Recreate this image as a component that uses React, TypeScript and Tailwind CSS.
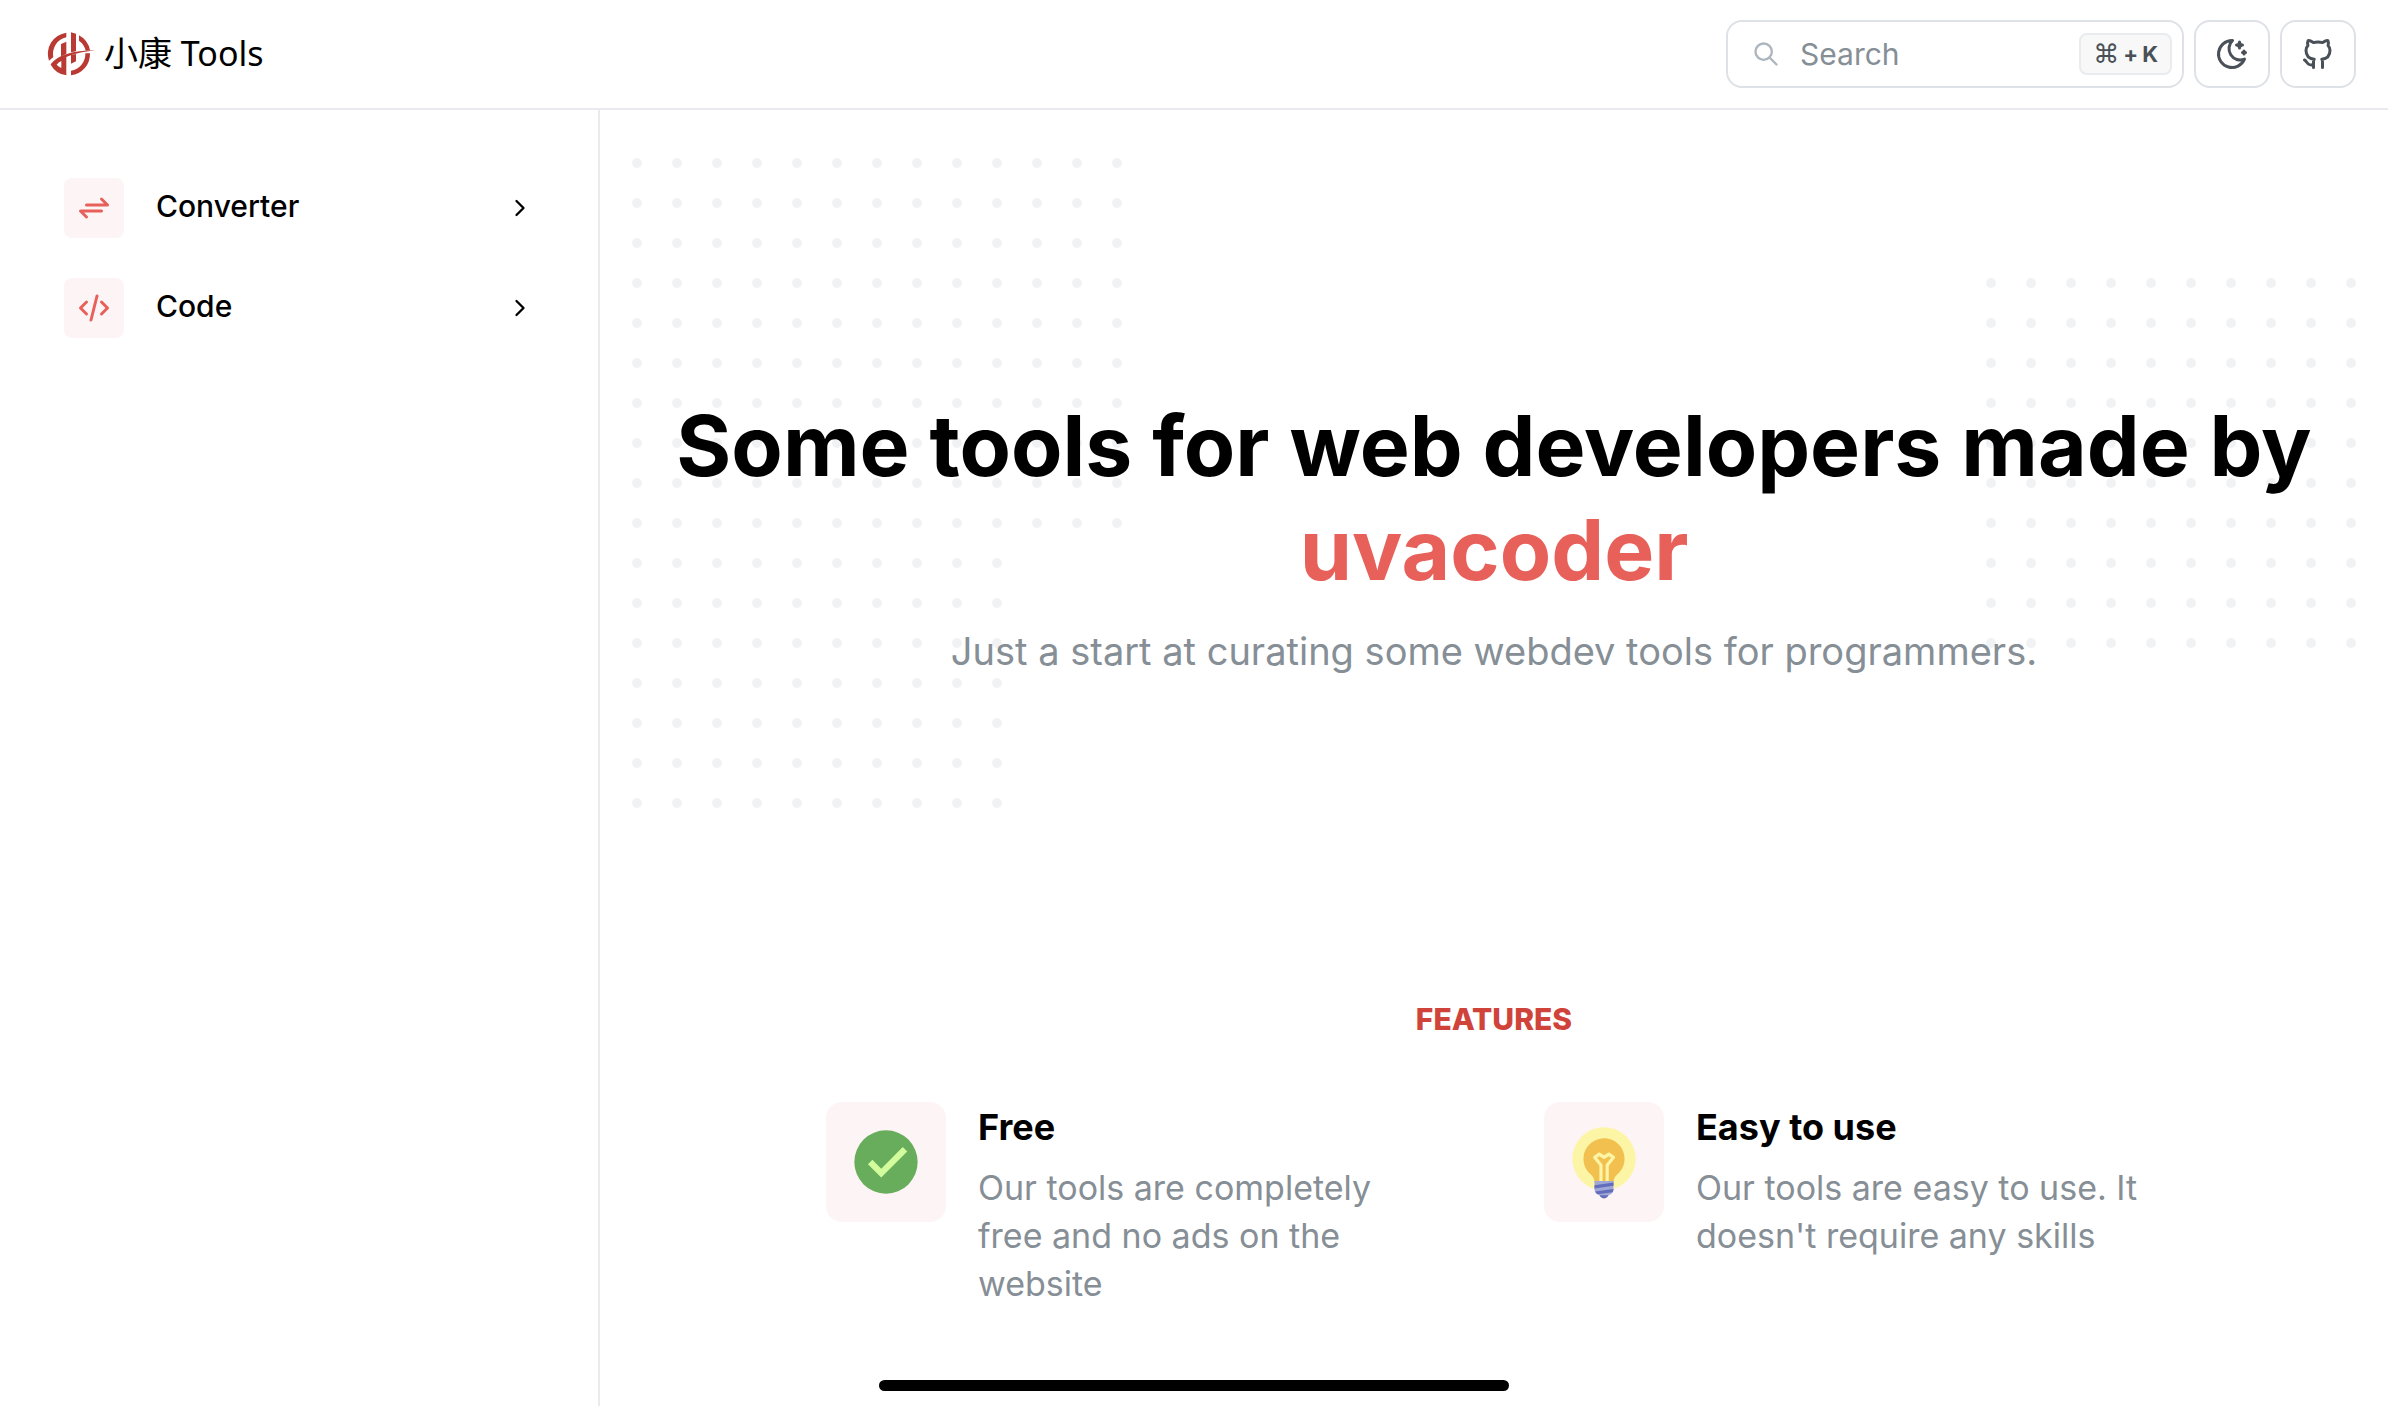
import { TbArrowsExchange, TbBrandGithub, TbChevronRight, TbCode, TbMoonStars, TbSearch } from "react-icons/tb";
import type { ReactNode } from "react";

function LogoMark() {
  return (
    <svg viewBox="0 0 162 162" className="size-[54px]" aria-hidden="true">
      <g fill="#b93a33">
        <path d="M67 20 A64 64 0 0 0 15 104 L28 93 A50 50 0 0 1 67 34 Z" />
        <path d="M51 54 L67 47 V84 L51 91 Z" />
        <path d="M81 19 L96 23 V76 L81 79 Z" />
        <path d="M105 28 A64 64 0 0 1 138 73 L125 74 A50 50 0 0 0 105 44 Z" />
        <path d="M138 82 A64 64 0 0 1 81 148 V134 A50 50 0 0 0 124 82 Z" />
        <path d="M81 87 L96 84 V106 L81 113 Z" />
        <path d="M20 116 Q36 98 67 89 V148 A64 64 0 0 1 20 116 Z" />
        <path d="M20 115 Q50 74 155 73 Q66 82 26 117 Z" />
      </g>
      <path d="M38 116 Q44 108 52 105 V126 Q43 122 38 116 Z" fill="#fff" />
    </svg>
  );
}

function CheckIcon() {
  return (
    <svg viewBox="0 0 48 48" className="size-[76px]" aria-hidden="true">
      <circle cx="24" cy="24" r="20" fill="#68ad5b" />
      <polygon fill="#d3fd9d" points="34.6,14.6 21,28.2 15.4,22.6 12.6,25.4 21,33.8 37.4,17.4" />
    </svg>
  );
}

function IdeaIcon() {
  return (
    <svg viewBox="0 0 48 48" className="size-[76px]" aria-hidden="true">
      <circle fill="#fdf5a6" cx="24" cy="22" r="20" />
      <path
        fill="#f1c04f"
        d="M37,22c0-7.7-6.6-13.8-14.5-12.9c-6,0.7-10.8,5.5-11.4,11.5c-0.5,4.6,1.4,8.7,4.6,11.3c1.4,1.2,2.3,2.9,2.3,4.8V37h12v-0.1c0-1.8,0.8-3.6,2.2-4.8C35.1,29.7,37,26.1,37,22z"
      />
      <path
        fill="#fdf5a6"
        d="M30.6,20.2l-3-2c-0.3-0.2-0.8-0.2-1.1,0L24,19.8l-2.4-1.6c-0.3-0.2-0.8-0.2-1.1,0l-3,2c-0.2,0.2-0.4,0.4-0.4,0.7s0,0.6,0.2,0.8l3.8,4.7V37h2V26c0-0.2-0.1-0.4-0.2-0.6l-3.3-4.1l1.5-1l2.4,1.6c0.3,0.2,0.8,0.2,1.1,0l2.4-1.6l1.5,1l-3.3,4.1C25.1,25.6,25,25.8,25,26v11h2V26.4l3.8-4.7c0.2-0.2,0.3-0.5,0.2-0.8S30.8,20.3,30.6,20.2z"
      />
      <circle fill="#626dbb" cx="24" cy="44" r="3" />
      <path fill="#a1a8d7" d="M26,45h-4c-2.2,0-4-1.8-4-4v-5h12v5C30,43.2,28.2,45,26,45z" />
      <g fill="#626dbb">
        <path d="M30,41l-11.6,1.6c0.3,0.7,0.9,1.4,1.6,1.8l9.4-1.3C29.8,42.5,30,41.8,30,41z" />
        <polygon points="18,38.7 18,40.7 30,39 30,37" />
      </g>
    </svg>
  );
}

function Dots({ cols, rows }: { cols: number; rows: number }) {
  const dots: ReactNode[] = [];
  for (let r = 0; r < rows; r++) {
    for (let c = 0; c < cols; c++) {
      dots.push(<circle key={`${r}-${c}`} cx={c * 40 + 5} cy={r * 40 + 5} r="5" />);
    }
  }
  return (
    <svg width={cols * 40 - 30} height={rows * 40 - 30} fill="#f1f2f4" aria-hidden="true">
      {dots}
    </svg>
  );
}

function NavItem({ icon, label }: { icon: ReactNode; label: string }) {
  return (
    <li>
      <button type="button" className="flex w-full items-center gap-8 px-16 py-5 text-black">
        <span className="flex size-[60px] items-center justify-center rounded-lg bg-[#fdf4f5] text-[#e8605a]">
          {icon}
        </span>
        <span className="pb-1 text-[30px] leading-[44px] font-medium">{label}</span>
        <TbChevronRight className="ml-auto size-7" />
      </button>
    </li>
  );
}

function Feature({ icon, title, children }: { icon: ReactNode; title: string; children: ReactNode }) {
  return (
    <article className="flex items-start gap-8">
      <div className="flex size-[120px] shrink-0 items-center justify-center rounded-2xl bg-[#fdf4f5]">{icon}</div>
      <div className="pr-4">
        <h3 className="text-[36px] leading-[50px] font-bold">{title}</h3>
        <p className="mt-3 text-[34px] leading-[48px] text-[#868e96]">{children}</p>
      </div>
    </article>
  );
}

const iconButton =
  "flex h-[68px] w-[76px] items-center justify-center rounded-2xl border-2 border-[#dee2e6] bg-white text-[#495057]";

export default function App() {
  return (
    <div className="flex min-h-screen flex-col bg-white font-['Inter','Noto_Sans_CJK_SC',sans-serif] text-black">
      <header className="flex h-[110px] items-center justify-between border-b-2 border-[#e9e9ef] pr-8 pl-11">
        <a href="#" className="flex items-center gap-[6px] pb-[2px]">
          <LogoMark />
          <span className="font-['Noto_Sans','Noto_Sans_CJK_SC',sans-serif] text-[34px] leading-[44px]">
            小康 Tools
          </span>
        </a>
        <div className="flex items-center gap-[10px]">
          <label className="flex h-[68px] w-[458px] items-center rounded-2xl border-2 border-[#dee2e6] pr-[10px] pl-6 text-[#adb5bd]">
            <TbSearch className="size-7 shrink-0" />
            <input
              type="text"
              aria-label="Search"
              placeholder="Search"
              className="ml-5 min-w-0 flex-1 text-[30px] leading-[44px] outline-none placeholder:text-[#868e96]"
            />
            <kbd className="flex h-[42px] items-center gap-1 rounded-lg border-2 border-[#e9ecef] bg-[#f8f8f9] px-3 font-['Inter',sans-serif] text-[22px] font-bold text-[#495057]">
              <span className="font-['DejaVu_Sans',sans-serif] text-[26px] leading-[38px] font-normal">⌘</span>
              <span>+</span>
              <span>K</span>
            </kbd>
          </label>
          <button type="button" aria-label="Toggle dark mode" className={iconButton}>
            <TbMoonStars className="size-9" />
          </button>
          <a href="#" aria-label="GitHub" className={iconButton}>
            <TbBrandGithub className="size-9" />
          </a>
        </div>
      </header>

      <div className="flex flex-1">
        <nav className="w-[600px] shrink-0 border-r-2 border-[#e9ecef] pt-12">
          <ul>
            <NavItem icon={<TbArrowsExchange className="size-9" />} label="Converter" />
            <NavItem icon={<TbCode className="size-9" />} label="Code" />
          </ul>
        </nav>

        <main className="flex-1 px-8 pt-12">
          <section className="relative pt-[236px]">
            <div className="absolute top-0 left-0 flex flex-col gap-[30px]">
              <Dots cols={13} rows={10} />
              <Dots cols={10} rows={7} />
            </div>
            <div className="absolute top-[120px] right-0">
              <Dots cols={10} rows={10} />
            </div>
            <div className="relative text-center">
              <h1 className="text-[84px] leading-[104px] font-bold">
                Some tools for web developers made by <br />
                <span className="text-[#e8605a]">uvacoder</span>
              </h1>
              <p className="mt-[22px] text-[38px] leading-[54px] text-[#868e96]">
                Just a start at curating some webdev tools for programmers.
              </p>
            </div>
          </section>

          <section className="pt-80 pb-24">
            <h2 className="text-center text-[30px] leading-[42px] font-extrabold text-[#d0433a]">FEATURES</h2>
            <div className="mx-auto mt-[62px] grid max-w-[1336px] grid-cols-2 gap-[100px]">
              <Feature icon={<CheckIcon />} title="Free">
                Our tools are completely free and no ads on the website
              </Feature>
              <Feature icon={<IdeaIcon />} title="Easy to use">
                Our tools are easy to use. It doesn't require any skills
              </Feature>
            </div>
          </section>
        </main>
      </div>

      <div className="fixed bottom-[15px] left-1/2 h-[11px] w-[630px] -translate-x-1/2 rounded-full bg-black" />
    </div>
  );
}
